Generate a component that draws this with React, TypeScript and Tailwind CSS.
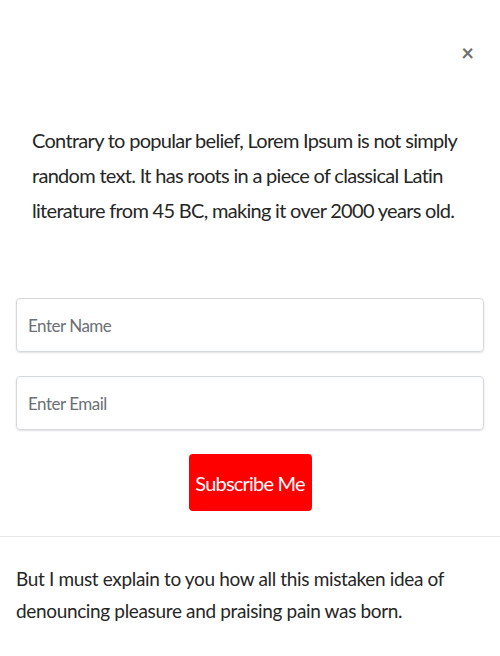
export default function App() {
  return (
    <div
      className="w-full min-h-screen bg-white text-[#222]"
      style={{ fontFamily: "Lato, 'Liberation Sans', sans-serif" }}
    >
      <div className="flex justify-end pt-[40px] pr-[26px]">
        <button className="text-[22px] leading-[26px] font-bold text-[#6f6f6f]">×</button>
      </div>

      <p className="px-8 mt-[57px] text-[20px] leading-[35px] tracking-[-0.7px] text-[#262626]">
        Contrary to popular belief, Lorem Ipsum is not simply random text. It has roots in a
        piece of classical Latin literature from 45 BC, making it over 2000 years old.
      </p>

      <form className="px-4 mt-[70px] flex flex-col gap-6" onSubmit={(e) => e.preventDefault()}>
        <input
          type="text"
          placeholder="Enter Name"
          className="w-full h-[54px] px-[11px] rounded border border-[#d5d8dd] shadow-[0_1px_2px_rgba(0,0,0,0.12)] text-[17px] tracking-[-0.5px] placeholder:text-[#6b6f75] outline-none"
        />
        <input
          type="email"
          placeholder="Enter Email"
          className="w-full h-[54px] px-[11px] rounded border border-[#d5d8dd] shadow-[0_1px_2px_rgba(0,0,0,0.12)] text-[17px] tracking-[-0.5px] placeholder:text-[#6b6f75] outline-none"
        />
        <div className="flex justify-center">
          <button
            type="submit"
            className="w-[123px] h-[57px] rounded bg-[#ff0000] text-white text-[20px] tracking-[-0.8px]"
          >
            Subscribe Me
          </button>
        </div>
      </form>

      <div className="mt-[25px] border-t border-[#e5e7eb] px-4 pt-[26px]">
        <p className="text-[19px] leading-[32px] tracking-[-0.35px] text-[#262626]">
          But I must explain to you how all this mistaken idea of denouncing pleasure and
          praising pain was born.
        </p>
      </div>
    </div>
  );
}
